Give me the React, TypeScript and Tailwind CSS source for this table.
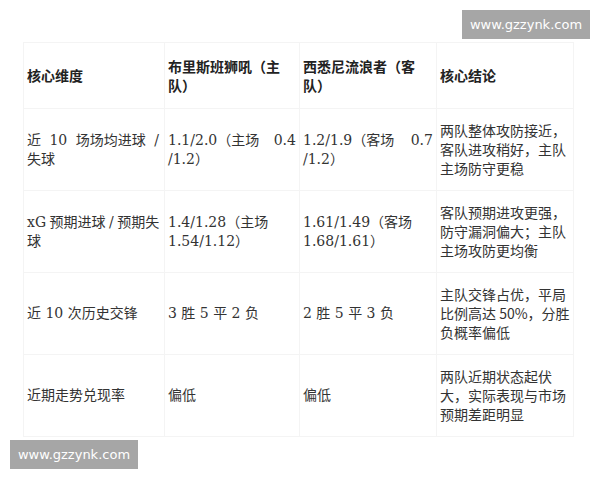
const serif = "font-['DejaVu_Serif','Noto_Sans_CJK_SC',serif]";
const sans = "font-['Noto_Sans_CJK_SC','DejaVu_Sans',sans-serif]";

// spacing for the justified first lines (only the spaces stretch in the original)
const rows = [
  {
    dim: '近 10 场场均进球 / 失球',
    home: '1.1/2.0（主场 0.4 /1.2）',
    away: '1.2/1.9（客场 0.7 /1.2）',
    note: '两队整体攻防接近，客队进攻稍好，主队主场防守更稳',
    ws: ['[word-spacing:4px]', '[word-spacing:10px]', '[word-spacing:12px]'],
  },
  {
    dim: 'xG 预期进球 / 预期失球',
    home: '1.4/1.28（主场 1.54/1.12）',
    away: '1.61/1.49（客场 1.68/1.61）',
    note: '客队预期进攻更强，防守漏洞偏大；主队主场攻防更均衡',
    ws: ['[word-spacing:-1px]', '', ''],
  },
  {
    dim: '近 10 次历史交锋',
    home: '3 胜 5 平 2 负',
    away: '2 胜 5 平 3 负',
    note: '主队交锋占优，平局比例高达 50%，分胜负概率偏低',
    ws: ['', '', ''],
  },
  {
    dim: '近期走势兑现率',
    home: '偏低',
    away: '偏低',
    note: '两队近期状态起伏大，实际表现与市场预期差距明显',
    ws: ['', '', ''],
  },
];

function Watermark({ className }: { className: string }) {
  return (
    <div
      className={`absolute w-[128px] h-[29px] bg-[#a6a6a6] text-white text-[13px] font-['DejaVu_Sans',sans-serif] flex items-center justify-center ${className}`}
    >
      www.gzzynk.com
    </div>
  );
}

export default function App() {
  const cell = 'border border-[#f4f4f4] px-[3px] align-middle text-left';
  return (
    <div className="relative w-[600px] h-[480px] bg-white overflow-hidden pt-[42px] pl-[23px] text-[#333]">
      <table className="table-fixed border-collapse text-[14px] leading-[19px]">
        <colgroup>
          <col className="w-[141px]" />
          <col className="w-[135px]" />
          <col className="w-[137px]" />
          <col className="w-[137px]" />
        </colgroup>
        <thead>
          <tr className={`h-[66px] text-[#222] ${sans}`}>
            <th className={`${cell} font-bold`}>核心维度</th>
            <th className={`${cell} font-bold`}>布里斯班狮吼（主队）</th>
            <th className={`${cell} font-bold`}>西悉尼流浪者（客队）</th>
            <th className={`${cell} font-bold`}>核心结论</th>
          </tr>
        </thead>
        <tbody>
          {rows.map((r) => (
            <tr key={r.dim} className="h-[82px]">
              <td className={`${cell} ${serif} ${r.ws[0]}`}>{r.dim}</td>
              <td className={`${cell} ${serif} ${r.ws[1]}`}>{r.home}</td>
              <td className={`${cell} ${serif} ${r.ws[2]}`}>{r.away}</td>
              <td className={`${cell} ${sans}`}>{r.note}</td>
            </tr>
          ))}
        </tbody>
      </table>
      <Watermark className="left-[462px] top-[10px]" />
      <Watermark className="left-[10px] top-[440px]" />
    </div>
  );
}
